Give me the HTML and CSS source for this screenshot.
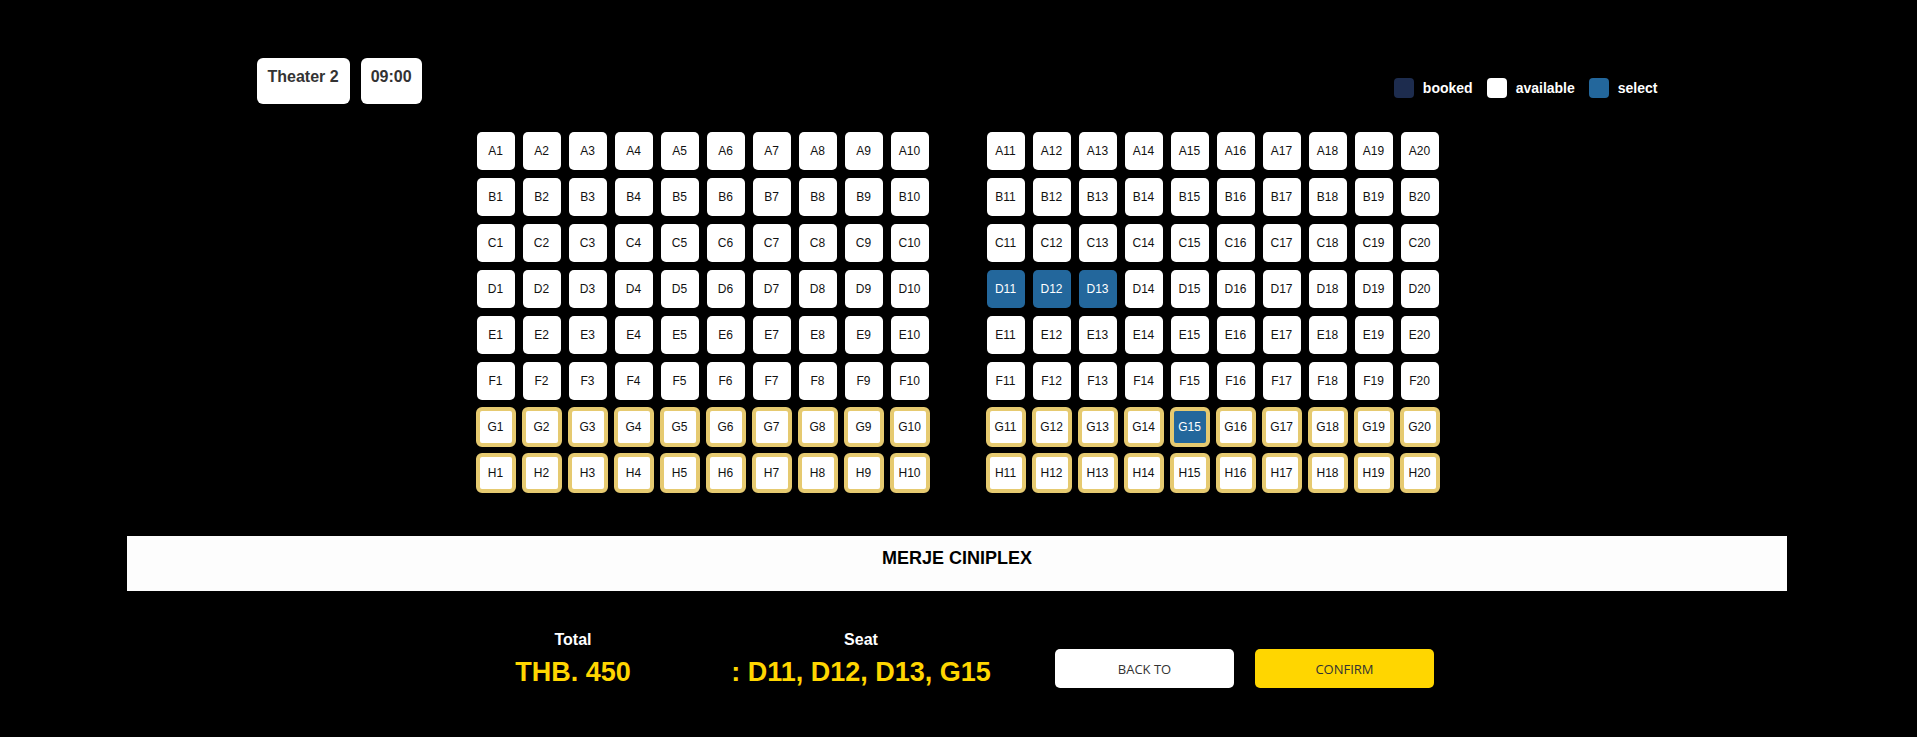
FILE: index.html
```html
<!DOCTYPE html>
<html lang="en">
<head>
  <meta charset="UTF-8">
  <meta name="viewport" content="width=device-width, initial-scale=1.0">
  <title>Select Seat</title>
  <link rel="stylesheet" href="styles.css">
</head>
<body>
  <div class="top">
    <div class="show-info">
      <div class="info-box theater">Theater 2</div>
      <div class="info-box">09:00</div>
    </div>
    <div class="legend">
      <span class="legend-box booked"></span><span class="legend-label">booked</span>
      <span class="legend-box available"></span><span class="legend-label">available</span>
      <span class="legend-box select"></span><span class="legend-label">select</span>
    </div>
  </div>

  <!-- Plano de assentos -->
  <div class="hall">
    <div class="block">
      <div class="seat">A1</div><div class="seat">A2</div><div class="seat">A3</div><div class="seat">A4</div><div class="seat">A5</div><div class="seat">A6</div><div class="seat">A7</div><div class="seat">A8</div><div class="seat">A9</div><div class="seat">A10</div>
      <div class="seat">B1</div><div class="seat">B2</div><div class="seat">B3</div><div class="seat">B4</div><div class="seat">B5</div><div class="seat">B6</div><div class="seat">B7</div><div class="seat">B8</div><div class="seat">B9</div><div class="seat">B10</div>
      <div class="seat">C1</div><div class="seat">C2</div><div class="seat">C3</div><div class="seat">C4</div><div class="seat">C5</div><div class="seat">C6</div><div class="seat">C7</div><div class="seat">C8</div><div class="seat">C9</div><div class="seat">C10</div>
      <div class="seat">D1</div><div class="seat">D2</div><div class="seat">D3</div><div class="seat">D4</div><div class="seat">D5</div><div class="seat">D6</div><div class="seat">D7</div><div class="seat">D8</div><div class="seat">D9</div><div class="seat">D10</div>
      <div class="seat">E1</div><div class="seat">E2</div><div class="seat">E3</div><div class="seat">E4</div><div class="seat">E5</div><div class="seat">E6</div><div class="seat">E7</div><div class="seat">E8</div><div class="seat">E9</div><div class="seat">E10</div>
      <div class="seat">F1</div><div class="seat">F2</div><div class="seat">F3</div><div class="seat">F4</div><div class="seat">F5</div><div class="seat">F6</div><div class="seat">F7</div><div class="seat">F8</div><div class="seat">F9</div><div class="seat">F10</div>
      <div class="seat vip">G1</div><div class="seat vip">G2</div><div class="seat vip">G3</div><div class="seat vip">G4</div><div class="seat vip">G5</div><div class="seat vip">G6</div><div class="seat vip">G7</div><div class="seat vip">G8</div><div class="seat vip">G9</div><div class="seat vip">G10</div>
      <div class="seat vip">H1</div><div class="seat vip">H2</div><div class="seat vip">H3</div><div class="seat vip">H4</div><div class="seat vip">H5</div><div class="seat vip">H6</div><div class="seat vip">H7</div><div class="seat vip">H8</div><div class="seat vip">H9</div><div class="seat vip">H10</div>
    </div>
    <div class="block">
      <div class="seat">A11</div><div class="seat">A12</div><div class="seat">A13</div><div class="seat">A14</div><div class="seat">A15</div><div class="seat">A16</div><div class="seat">A17</div><div class="seat">A18</div><div class="seat">A19</div><div class="seat">A20</div>
      <div class="seat">B11</div><div class="seat">B12</div><div class="seat">B13</div><div class="seat">B14</div><div class="seat">B15</div><div class="seat">B16</div><div class="seat">B17</div><div class="seat">B18</div><div class="seat">B19</div><div class="seat">B20</div>
      <div class="seat">C11</div><div class="seat">C12</div><div class="seat">C13</div><div class="seat">C14</div><div class="seat">C15</div><div class="seat">C16</div><div class="seat">C17</div><div class="seat">C18</div><div class="seat">C19</div><div class="seat">C20</div>
      <div class="seat selected">D11</div><div class="seat selected">D12</div><div class="seat selected">D13</div><div class="seat">D14</div><div class="seat">D15</div><div class="seat">D16</div><div class="seat">D17</div><div class="seat">D18</div><div class="seat">D19</div><div class="seat">D20</div>
      <div class="seat">E11</div><div class="seat">E12</div><div class="seat">E13</div><div class="seat">E14</div><div class="seat">E15</div><div class="seat">E16</div><div class="seat">E17</div><div class="seat">E18</div><div class="seat">E19</div><div class="seat">E20</div>
      <div class="seat">F11</div><div class="seat">F12</div><div class="seat">F13</div><div class="seat">F14</div><div class="seat">F15</div><div class="seat">F16</div><div class="seat">F17</div><div class="seat">F18</div><div class="seat">F19</div><div class="seat">F20</div>
      <div class="seat vip">G11</div><div class="seat vip">G12</div><div class="seat vip">G13</div><div class="seat vip">G14</div><div class="seat vip selected">G15</div><div class="seat vip">G16</div><div class="seat vip">G17</div><div class="seat vip">G18</div><div class="seat vip">G19</div><div class="seat vip">G20</div>
      <div class="seat vip">H11</div><div class="seat vip">H12</div><div class="seat vip">H13</div><div class="seat vip">H14</div><div class="seat vip">H15</div><div class="seat vip">H16</div><div class="seat vip">H17</div><div class="seat vip">H18</div><div class="seat vip">H19</div><div class="seat vip">H20</div>
    </div>
  </div>

  <div class="screen">MERJE CINIPLEX</div>

  <div class="summary">
    <div class="total">
      <div class="summary-label">Total</div>
      <div class="summary-value">THB. 450</div>
    </div>
    <div class="seats">
      <div class="summary-label">Seat</div>
      <div class="summary-value">: D11, D12, D13, G15</div>
    </div>
    <div class="actions">
      <button class="btn btn-back">BACK TO</button>
      <button class="btn btn-confirm">CONFIRM</button>
    </div>
  </div>
</body>
</html>
```

FILE: styles.css
```css
body {
  margin: 0;
  background-color: #000;
  font-family: "Liberation Sans", Arial, sans-serif;
}

/* Topo: sala e legenda */
.top {
  width: 1404px;
  margin: 0 auto;
  padding-top: 58px;
  display: flex;
  justify-content: space-between;
  align-items: flex-start;
}

.show-info {
  display: flex;
  gap: 11px;
}

.info-box {
  height: 46px;
  box-sizing: border-box;
  padding: 10px 10px 0;
  background-color: #fff;
  border-radius: 6px;
  color: #333;
  font-size: 16px;
  font-weight: bold;
}

.info-box.theater {
  padding: 10px 11px 0;
}

.legend {
  display: flex;
  align-items: center;
  margin-top: 20px;
  margin-right: 3px;
}

.legend-box {
  width: 20px;
  height: 20px;
  border-radius: 4px;
  margin-right: 9px;
}

.legend-box.booked { background-color: #1d2c4e; }
.legend-box.available { background-color: #fff; }
.legend-box.select { background-color: #23679c; }

.legend-label {
  color: #fff;
  font-size: 14px;
  font-weight: bold;
  margin-right: 14px;
}

.legend-label:last-child {
  margin-right: 0;
}

/* Assentos */
.hall {
  display: flex;
  justify-content: center;
  gap: 58px;
  margin-top: 28px;
  padding-right: 2px;
}

.block {
  display: grid;
  grid-template-columns: repeat(10, 38px);
  grid-auto-rows: 38px;
  gap: 8px;
}

.seat {
  display: flex;
  align-items: center;
  justify-content: center;
  background-color: #fff;
  border-radius: 5px;
  color: #111;
  font-size: 12px;
}

.seat.vip {
  width: 40px;
  height: 40px;
  margin: -1px;
  box-sizing: border-box;
  border: 4px solid #e6ca70;
  border-radius: 6px;
}

.seat.selected {
  background-color: #23679c;
  color: #fff;
}

/* Tela */
.screen {
  height: 55px;
  box-sizing: border-box;
  margin: 44px 130px 0 127px;
  padding-top: 12px;
  background-color: #fdfdfd;
  text-align: center;
  font-size: 18px;
  font-weight: bold;
  color: #000;
}

/* Resumo */
.summary {
  display: flex;
  justify-content: center;
  align-items: flex-start;
  margin-top: 40px;
}

.total {
  width: 180px;
  text-align: center;
}

.seats {
  width: 280px;
  margin-left: 58px;
  text-align: center;
}

.summary-label {
  color: #fff;
  font-size: 16px;
  font-weight: bold;
}

.summary-value {
  margin-top: 8px;
  color: #ffd600;
  font-size: 27px;
  font-weight: bold;
}

.actions {
  display: flex;
  gap: 21px;
  margin-left: 54px;
  margin-top: 18px;
}

.btn {
  width: 179px;
  height: 39px;
  border: none;
  border-radius: 5px;
  font-family: "Open Sans", sans-serif;
  font-size: 13px;
  color: #333;
  cursor: pointer;
}

.btn-back {
  background-color: #fff;
}

.btn-confirm {
  background-color: #ffd600;
}
```
